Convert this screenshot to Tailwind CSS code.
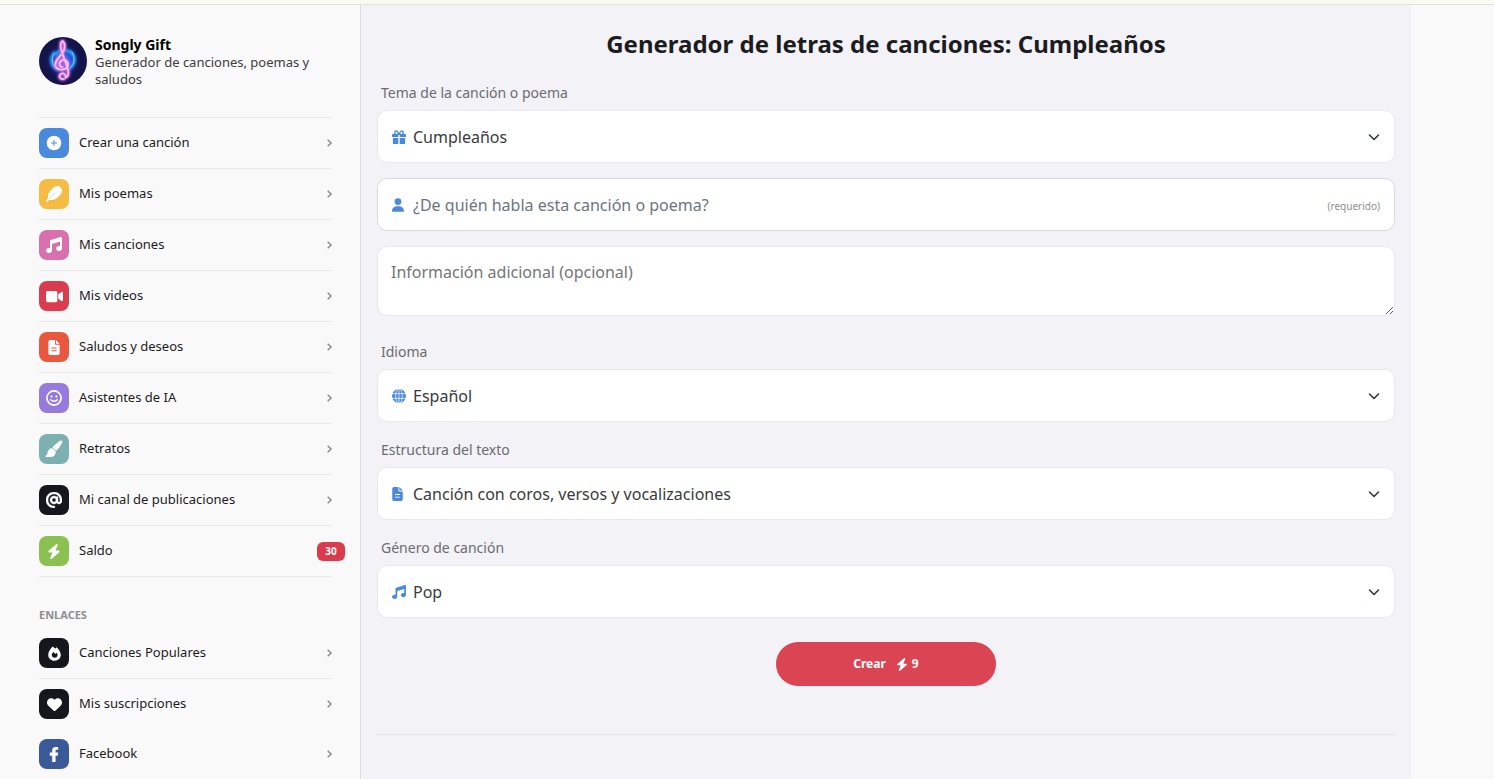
<!DOCTYPE html>
<html lang="es">
<head>
  <meta charset="UTF-8">
  <meta name="viewport" content="width=device-width, initial-scale=1.0">
  <title>Songly Gift</title>
  <script src="https://cdn.jsdelivr.net/npm/@tailwindcss/browser@4"></script>
</head>
<body class="flex h-screen flex-col overflow-hidden bg-[#f9f9f9] font-['Noto_Sans',sans-serif] text-[#1c1c1e]">
  <!-- Iconos compartidos -->
  <svg class="hidden" aria-hidden="true">
    <symbol id="i-right" viewBox="0 0 8 12"><path d="M2.7 2.800L6 6 2.700 9.200" fill="none" stroke="currentColor" stroke-width="1.5"/></symbol>
    <symbol id="i-down" viewBox="0 0 16 16"><path d="M3.500 6L8 10.500 12.500 6" fill="none" stroke="#343a40" stroke-width="1.600" stroke-linecap="round" stroke-linejoin="round"/></symbol>
    <symbol id="i-bolt" viewBox="0 0 448 512"><path d="M349.4 44.6c5.9-13.7 1.5-29.7-10.6-38.5s-28.6-8-39.9 1.8l-256 224c-10 8.8-13.6 22.900-8.900 35.300S50.700 288 64 288H175.500L98.600 467.400c-5.900 13.700-1.500 29.700 10.600 38.500s28.600 8 39.900-1.800l256-224c10-8.800 13.600-22.900 8.900-35.300s-16.600-20.700-30-20.700H272.500L349.400 44.600z"/></symbol>
    <symbol id="i-music" viewBox="0 0 512 512"><path d="M499.1 6.3c8.1 6 12.9 15.6 12.9 25.7v72V368c0 44.2-43 80-96 80s-96-35.8-96-80s43-80 96-80c11.2 0 22 1.6 32 4.6V147L192 223.8V432c0 44.2-43 80-96 80s-96-35.8-96-80s43-80 96-80c11.2 0 22 1.6 32 4.6V200 128c0-14.1 9.3-26.6 22.8-30.7l320-96c9.7-2.9 20.2-1.1 28.3 5z"/></symbol>
    <symbol id="i-file" viewBox="0 0 384 512"><path fill-rule="evenodd" d="M64 0C28.7 0 0 28.7 0 64V448c0 35.3 28.7 64 64 64H320c35.3 0 64-28.7 64-64V160H256c-17.7 0-32-14.3-32-32V0H64zM256 0V128H384L256 0zM112 256H272a16 16 0 0 1 0 32H112a16 16 0 0 1 0-32zM112 352H272a16 16 0 0 1 0 32H112a16 16 0 0 1 0-32z"/></symbol>
  </svg>

  <div class="h-[5px] shrink-0 border-b border-[#dfe1da] bg-[#f9faf0]"></div>

  <div class="flex min-h-0 flex-1">
    <!-- Menú lateral -->
    <aside class="w-[361px] shrink-0 border-r border-[#dcdce0] pt-8 pr-7 pl-[39px]">
      <div class="flex gap-2">
        <svg class="size-12 shrink-0" viewBox="0 0 48 48" role="img" aria-label="Songly Gift">
          <defs>
            <radialGradient id="glow"><stop offset="0" stop-color="#3b7dff"/><stop offset=".5" stop-color="#1f4fd8"/><stop offset="1" stop-color="#14145a" stop-opacity="0"/></radialGradient>
            <filter id="soft" x="-30%" y="-30%" width="160%" height="160%"><feGaussianBlur stdDeviation="1.1"/></filter>
          </defs>
          <circle cx="24" cy="24" r="24" fill="#14144a"/>
          <circle cx="24" cy="24" r="18" fill="url(#glow)"/>
          <g fill="none" stroke-linecap="round">
            <path d="M15 16c-5 6-3 14 5 17M31 14c7 5 6 15-3 19M17 17c3-4 11-6 16 0" stroke="#27b4ff" stroke-width="2.6" filter="url(#soft)"/>
            <path d="M15 17c-3 5-2 11 3 15M33 15c3 5 3 12-2 16" stroke="#8fd8ff" stroke-width=".8"/>
            <path d="M25 42c-4 1-6-3-3-5s6 2 4 4c3-1 4-4 3-8L22 12c-1-5 0-8 1.500-8 3 2 3 8 0 12-4 5-8 8-7 13 1 4 9 5 12 1 2-4-1-8-5-7-4 2-4 6 0 7" stroke="#d067f0" stroke-width="3.6" filter="url(#soft)"/>
            <path d="M25 42c-4 1-6-3-3-5s6 2 4 4c3-1 4-4 3-8L22 12c-1-5 0-8 1.500-8 3 2 3 8 0 12-4 5-8 8-7 13 1 4 9 5 12 1 2-4-1-8-5-7-4 2-4 6 0 7" stroke="#fbc0e4" stroke-width="1.700"/>
          </g>
        </svg>
        <div class="text-[13px] leading-[17px] text-[#3c3c3e]">
          <h2 class="mb-0.5 text-sm leading-[15px] font-bold text-black">Songly Gift</h2>
          <p>Generador de canciones, poemas y saludos</p>
        </div>
      </div>

      <nav class="mt-[29px] border-t border-[#e8e8ea] text-[13px]">
        <a href="#crear" class="flex h-[51px] items-center border-b border-[#e8e8ea]">
          <span class="flex size-[30px] items-center justify-center rounded-lg bg-[#4a89dc] text-white"><svg class="size-4" viewBox="0 0 16 16"><circle cx="8" cy="8" r="7.3" fill="currentColor"/><path d="M8 5v6M5 8h6" stroke="#4a89dc" stroke-width="1"/></svg></span>
          <span class="ml-2.5 flex-1">Crear una canción</span>
          <svg class="-mr-px h-3 w-2 text-[#8a8a8e]"><use href="#i-right"/></svg>
        </a>
        <a href="#poemas" class="flex h-[51px] items-center border-b border-[#e8e8ea]">
          <span class="flex size-[30px] items-center justify-center rounded-lg bg-[#f6bb42] text-white"><svg class="size-4" viewBox="0 0 512 512" fill="currentColor"><path d="M467 45c-62-62-161-65-252 26l-86 85c-60 61-70 151-64 211L7 471c-10 10-10 25 0 34s25 9 34 0l66-66c52 16 172 18 247-55l96-96 34-44c45-74 34-149-17-199z"/><path d="M90 420L290 222" stroke="#f6bb42" stroke-width="14"/></svg></span>
          <span class="ml-2.5 flex-1">Mis poemas</span>
          <svg class="-mr-px h-3 w-2 text-[#8a8a8e]"><use href="#i-right"/></svg>
        </a>
        <a href="#canciones" class="flex h-[51px] items-center border-b border-[#e8e8ea]">
          <span class="flex size-[30px] items-center justify-center rounded-lg bg-[#d770ad] text-white"><svg class="size-4" fill="currentColor"><use href="#i-music"/></svg></span>
          <span class="ml-2.5 flex-1">Mis canciones</span>
          <svg class="-mr-px h-3 w-2 text-[#8a8a8e]"><use href="#i-right"/></svg>
        </a>
        <a href="#videos" class="flex h-[51px] items-center border-b border-[#e8e8ea]">
          <span class="flex size-[30px] items-center justify-center rounded-lg bg-[#da3b4e] text-white"><svg class="h-[15px] w-[17px]" viewBox="0 0 576 512" fill="currentColor"><path d="M336.200 64H47.800C21.400 64 0 85.400 0 111.800v288.400C0 426.600 21.400 448 47.800 448h288.400c26.400 0 47.800-21.400 47.800-47.800V111.800c0-26.400-21.400-47.800-47.800-47.800zm189.400 37.700L416 177.300v157.400l109.600 75.500c21.200 14.600 50.400-.3 50.400-25.800V127.500c0-25.400-29.100-40.400-50.400-25.800z"/></svg></span>
          <span class="ml-2.5 flex-1">Mis videos</span>
          <svg class="-mr-px h-3 w-2 text-[#8a8a8e]"><use href="#i-right"/></svg>
        </a>
        <a href="#saludos" class="flex h-[51px] items-center border-b border-[#e8e8ea]">
          <span class="flex size-[30px] items-center justify-center rounded-lg bg-[#e9573f] text-white"><svg class="h-[15px] w-3" fill="currentColor"><use href="#i-file"/></svg></span>
          <span class="ml-2.5 flex-1">Saludos y deseos</span>
          <svg class="-mr-px h-3 w-2 text-[#8a8a8e]"><use href="#i-right"/></svg>
        </a>
        <a href="#asistentes" class="flex h-[51px] items-center border-b border-[#e8e8ea]">
          <span class="flex size-[30px] items-center justify-center rounded-lg bg-[#967adc] text-white"><svg class="size-4" viewBox="0 0 16 16"><circle cx="8" cy="8" r="7.100" fill="none" stroke="currentColor" stroke-width="1.700"/><circle cx="5.600" cy="6.500" r="1.100" fill="currentColor"/><circle cx="10.400" cy="6.500" r="1.100" fill="currentColor"/><path d="M4.700 9.800c1.700 2 4.900 2 6.600 0" fill="none" stroke="currentColor" stroke-width="1.500" stroke-linecap="round"/></svg></span>
          <span class="ml-2.5 flex-1">Asistentes de IA</span>
          <svg class="-mr-px h-3 w-2 text-[#8a8a8e]"><use href="#i-right"/></svg>
        </a>
        <a href="#retratos" class="flex h-[51px] items-center border-b border-[#e8e8ea]">
          <span class="flex size-[30px] items-center justify-center rounded-lg bg-[#7db1b1] text-white"><svg class="size-[18px]" viewBox="0 0 18 18" fill="currentColor"><path d="M15.300.8c1.300-.8 2.500.4 1.900 1.700-1.300 2.800-3.400 6.200-6.100 8.300L7.500 7.400C9.500 4.700 12.600 2.400 15.300.8zM7 7.900l3.600 3.400c.5 3-1.900 5.800-4.800 5.800H1.200c-1 0-1-1.300-.2-1.600 1.300-.4 1.100-1.700 1.500-3 .6-2.500 2-4.300 4.500-4.600z"/></svg></span>
          <span class="ml-2.5 flex-1">Retratos</span>
          <svg class="-mr-px h-3 w-2 text-[#8a8a8e]"><use href="#i-right"/></svg>
        </a>
        <a href="#canal" class="flex h-[51px] items-center border-b border-[#e8e8ea]">
          <span class="flex size-[30px] items-center justify-center rounded-lg bg-[#16171c] text-white"><svg class="size-4" viewBox="0 0 512 512" fill="currentColor"><path stroke="currentColor" stroke-width="14" d="M256 64C150 64 64 150 64 256s86 192 192 192c17.700 0 32 14.300 32 32s-14.300 32-32 32C114.600 512 0 397.400 0 256S114.600 0 256 0S512 114.600 512 256v32c0 53-43 96-96 96c-29.300 0-55.600-13.200-73.200-33.900C320 371.100 289.500 384 256 384c-70.700 0-128-57.300-128-128s57.300-128 128-128c27.900 0 53.700 8.900 74.700 24.100c5.700-5 13.100-8.100 21.300-8.100c17.700 0 32 14.300 32 32v80 32c0 17.700 14.300 32 32 32s32-14.300 32-32V256c0-106-86-192-192-192zm64 192a64 64 0 1 0 -128 0 64 64 0 1 0 128 0z"/></svg></span>
          <span class="ml-2.5 flex-1">Mi canal de publicaciones</span>
          <svg class="-mr-px h-3 w-2 text-[#8a8a8e]"><use href="#i-right"/></svg>
        </a>
        <a href="#saldo" class="flex h-[51px] items-center border-b border-[#e8e8ea]">
          <span class="flex size-[30px] items-center justify-center rounded-lg bg-[#8cc152] text-white"><svg class="h-[15px] w-3.5" fill="currentColor"><use href="#i-bolt"/></svg></span>
          <span class="ml-2.5 flex-1">Saldo</span>
          <span class="-mr-[13px] flex h-[19px] w-7 items-center justify-center rounded-md bg-[#da3b4e] text-[10px] font-bold text-white">30</span>
        </a>
      </nav>

      <h3 class="mt-[30px] text-[11px] leading-4 font-bold text-[#8e8e92]">ENLACES</h3>
      <nav class="mt-[5px] text-[13px]">
        <a href="#populares" class="flex h-[51px] items-center border-b border-[#e8e8ea]">
          <span class="flex size-[30px] items-center justify-center rounded-lg bg-[#16171c] text-white"><svg class="size-[15px]" viewBox="0 0 16 16"><path fill="currentColor" fill-rule="evenodd" d="M6 .5c1 .7 1.900 1.500 2.600 2.400.5-.6 1-1.100 1.500-1.500 2.400 2 4.600 5 4.600 8 0 3.700-2.900 6.300-6.700 6.300S1.300 13 1.300 9.300C1.300 6.500 3.400 3 6 .5zM8.200 12.400c1.800 0 3.100-1.200 3.100-2.900 0-.9-.4-1.700-1-2.400L9 8.500 6.800 6.300C5.700 7.600 5.100 8.500 5.100 9.600c0 1.700 1.400 2.800 3.100 2.800z"/></svg></span>
          <span class="ml-2.5 flex-1">Canciones Populares</span>
          <svg class="-mr-px h-3 w-2 text-[#8a8a8e]"><use href="#i-right"/></svg>
        </a>
        <a href="#suscripciones" class="flex h-[50px] items-center">
          <span class="flex size-[30px] items-center justify-center rounded-lg bg-[#16171c] text-white"><svg class="size-[15px]" viewBox="0 0 512 512" fill="currentColor"><path d="M47.600 300.400L228.300 469.100c7.500 7 17.400 10.900 27.700 10.900s20.200-3.900 27.700-10.900L464.400 300.400c30.400-28.300 47.600-68 47.600-109.500v-5.800c0-69.900-50.500-129.500-119.400-141C347 36.500 300.600 51.400 268 84L256 96 244 84c-32.600-32.600-79-47.500-124.600-39.900C50.500 55.600 0 115.200 0 185.100v5.800c0 41.500 17.200 81.200 47.600 109.500z"/></svg></span>
          <span class="ml-2.5 flex-1">Mis suscripciones</span>
          <svg class="-mr-px h-3 w-2 text-[#8a8a8e]"><use href="#i-right"/></svg>
        </a>
        <a href="#facebook" class="flex h-[50px] items-center">
          <span class="flex size-[30px] items-center justify-center rounded-lg bg-[#3b5998] text-white"><svg class="h-[15px] w-2.5" viewBox="0 0 320 512" fill="currentColor"><path stroke="currentColor" stroke-width="16" d="M279.140 288l14.220-92.660h-88.910v-60.130c0-25.350 12.420-50.060 52.240-50.060h40.420V6.260S260.430 0 225.360 0c-73.220 0-121.080 44.380-121.080 124.720v70.620H22.890V288h81.390v224h100.170V288z"/></svg></span>
          <span class="ml-2.5 flex-1">Facebook</span>
          <svg class="-mr-px h-3 w-2 text-[#8a8a8e]"><use href="#i-right"/></svg>
        </a>
      </nav>
    </aside>

    <!-- Formulario -->
    <main class="max-w-[1050px] flex-1 bg-[#f2f2f7] px-4 pt-[23px]">
      <h1 class="text-center text-2xl leading-8 font-bold">Generador de letras de canciones: Cumpleaños</h1>

      <form class="mt-[21px]">
        <label for="tema" class="mb-1.5 block pl-1 text-sm leading-[23px] text-[#6c6c70]">Tema de la canción o poema</label>
        <div class="relative">
          <svg class="absolute top-5 left-[15px] size-3.5 text-[#4a89dc]" viewBox="0 0 16 16"><path fill="currentColor" d="M1 4.500h14a1 1 0 0 1 1 1V8H8.800V5.500H7.200V8H0V5.500a1 1 0 0 1 1-1zM1 9h6.200v7H2a1 1 0 0 1-1-1zM8.800 9H15v6a1 1 0 0 1-1 1H8.800z"/><path fill="none" stroke="currentColor" stroke-width="1.500" d="M8 5C7 2.500 6 1 4.500 1S2.300 4.500 4.500 5H8c1-2.500 2-4 3.500-4s2.200 3.500 0 4H8"/></svg>
          <select id="tema" class="block h-[53px] w-full appearance-none rounded-[10px] border border-[#e8e8ed] bg-white pr-10 pl-[35px] text-base text-[#3a3a3c]"><option>Cumpleaños</option></select>
          <svg class="pointer-events-none absolute top-[19px] right-[13px] size-4"><use href="#i-down"/></svg>
        </div>

        <div class="relative mt-[15px]">
          <svg class="absolute top-5 left-[15px] h-3.5 w-3 text-[#4a89dc]" viewBox="0 0 448 512" fill="currentColor"><path d="M224 256A128 128 0 1 0 224 0a128 128 0 1 0 0 256zm-45.700 48C79.800 304 0 383.800 0 482.300C0 498.700 13.300 512 29.700 512H418.300c16.400 0 29.700-13.300 29.700-29.700C448 383.800 368.200 304 269.700 304H178.300z"/></svg>
          <input id="persona" type="text" aria-label="¿De quién habla esta canción o poema?" placeholder="¿De quién habla esta canción o poema?" class="block h-[53px] w-full rounded-[10px] border border-[#d9d9e0] bg-white pr-24 pl-[35px] text-base placeholder:text-[#6c757d]">
          <span class="pointer-events-none absolute top-5 right-[15px] text-[10px] leading-4 text-[#8e8e92]">(requerido)</span>
        </div>

        <textarea id="info" aria-label="Información adicional" placeholder="Información adicional (opcional)" class="mt-[15px] block h-[70px] w-full rounded-[10px] border border-[#e8e8ed] bg-white px-[13px] py-[13px] text-base placeholder:text-[#757575]"></textarea>

        <label for="idioma" class="mt-6 mb-1.5 block pl-1 text-sm leading-[23px] text-[#6c6c70]">Idioma</label>
        <div class="relative">
          <svg class="absolute top-5 left-[15px] size-3.5" viewBox="0 0 16 16"><circle cx="8" cy="8" r="8" fill="#4a89dc"/><path d="M0 5.300h16M0 10.700h16M8 0v16" stroke="#fff" stroke-width=".8"/><ellipse cx="8" cy="8" rx="3.800" ry="8.400" fill="none" stroke="#fff" stroke-width=".8"/></svg>
          <select id="idioma" class="block h-[53px] w-full appearance-none rounded-[10px] border border-[#e8e8ed] bg-white pr-10 pl-[35px] text-base text-[#3a3a3c]"><option>Español</option></select>
          <svg class="pointer-events-none absolute top-[19px] right-[13px] size-4"><use href="#i-down"/></svg>
        </div>

        <label for="estructura" class="mt-4 mb-1.5 block pl-1 text-sm leading-[23px] text-[#6c6c70]">Estructura del texto</label>
        <div class="relative">
          <svg class="absolute top-5 left-[15px] h-3.5 w-[11px] text-[#4a89dc]" fill="currentColor"><use href="#i-file"/></svg>
          <select id="estructura" class="block h-[53px] w-full appearance-none rounded-[10px] border border-[#e8e8ed] bg-white pr-10 pl-[35px] text-base text-[#3a3a3c]"><option>Canción con coros, versos y vocalizaciones</option></select>
          <svg class="pointer-events-none absolute top-[19px] right-[13px] size-4"><use href="#i-down"/></svg>
        </div>

        <label for="genero" class="mt-4 mb-1.5 block pl-1 text-sm leading-[23px] text-[#6c6c70]">Género de canción</label>
        <div class="relative">
          <svg class="absolute top-5 left-[15px] size-3.5 text-[#4a89dc]" fill="currentColor"><use href="#i-music"/></svg>
          <select id="genero" class="block h-[53px] w-full appearance-none rounded-[10px] border border-[#e8e8ed] bg-white pr-10 pl-[35px] text-base text-[#3a3a3c]"><option>Pop</option></select>
          <svg class="pointer-events-none absolute top-[19px] right-[13px] size-4"><use href="#i-down"/></svg>
        </div>

        <button type="submit" class="mx-auto mt-6 flex h-11 w-[220px] items-center justify-center rounded-full bg-[#da4453] text-xs font-bold text-white">
          Crear
          <svg class="ml-2.5 h-[13px] w-3" fill="currentColor"><use href="#i-bolt"/></svg>
          <span class="ml-1">9</span>
        </button>
      </form>

      <hr class="mt-12 border-[#e2e2e7]">
    </main>
  </div>
</body>
</html>
